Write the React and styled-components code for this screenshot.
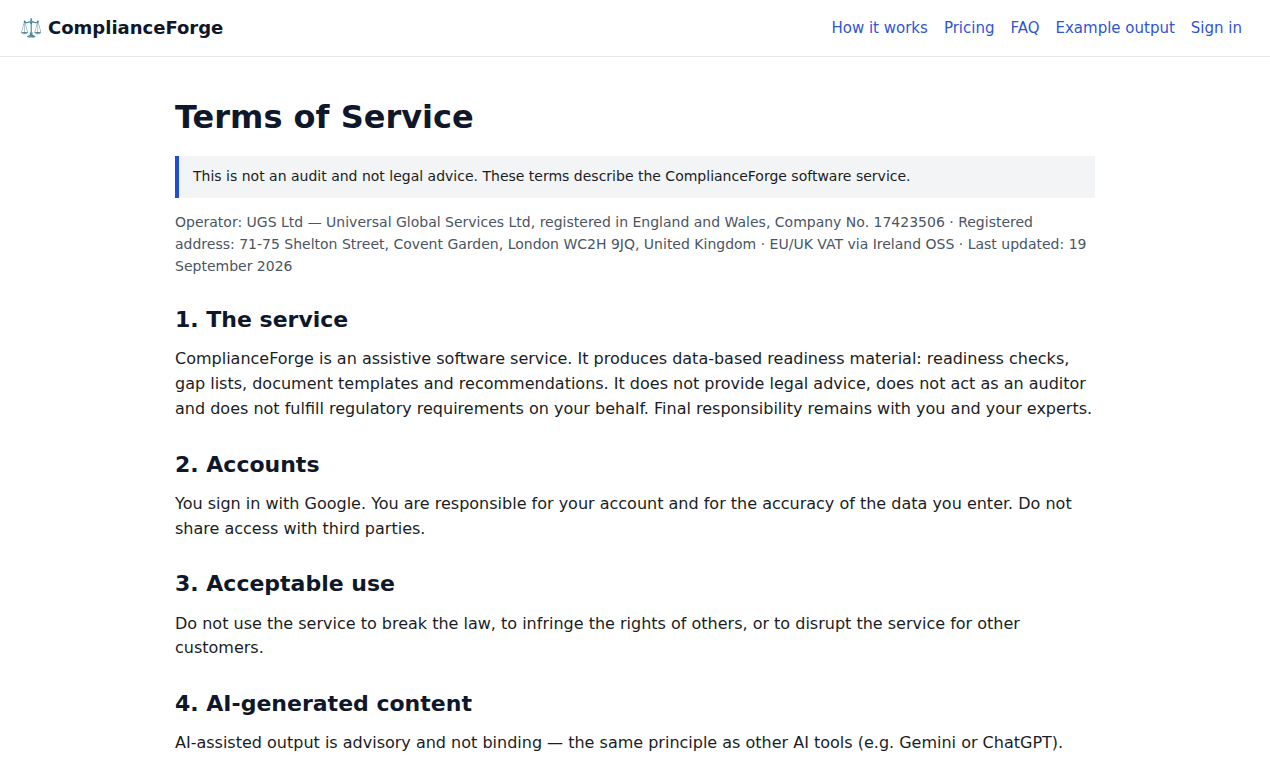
import React from "react";
import styled, { createGlobalStyle } from "styled-components";

const Global = createGlobalStyle`
  * { box-sizing: border-box; }
  html, body { margin: 0; padding: 0; background: #fff; }
  body { font-family: "DejaVu Sans", sans-serif; color: #0f172a; line-height: 1.5; font-size: 16px; }
`;
const Header = styled.header`
  height: 57px; border-bottom: 1px solid #e5e7eb; display: flex; align-items: center;
  justify-content: space-between; padding: 0 28px 0 20px; background: #fff;
`;
const Brand = styled.a`
  display: flex; align-items: center; gap: 6px; font-weight: 700; font-size: 18px; line-height: 26px; margin-top: -1px; color: #0f172a; text-decoration: none;
`;
const Nav = styled.nav`display: flex; gap: 16px;`;
const NavLink = styled.a`color: #2f55d4; font-size: 15px; text-decoration: none;`;
const Main = styled.main`width: 920px; margin: 0 auto; padding-top: 36px;`;
const Title = styled.h1`font-size: 32px; line-height: 48px; margin: 0 0 15px; font-weight: 700; color: #0f172a;`;
const Notice = styled.div`
  background: #f3f4f6; border-left: 4px solid #1d4ed8; padding: 9px 14px 11px; font-size: 14px; line-height: 22px; color: #1a1d24;
`;
const Meta = styled.p`font-size: 14px; line-height: 22px; color: #4b5563; margin: 13px 0 0;`;
const Section = styled.section`
  margin-top: 29px;
`;
const Heading = styled.h2`font-size: 22px; line-height: 28.6px; margin: 0 0 12.6px; font-weight: 700; color: #0f172a;`;
const Body = styled.p`font-size: 16px; line-height: 24.8px; margin: 0; color: #1a1d24;`;

const sections = [
  ["1. The service", "ComplianceForge is an assistive software service. It produces data-based readiness material: readiness checks, gap lists, document templates and recommendations. It does not provide legal advice, does not act as an auditor and does not fulfill regulatory requirements on your behalf. Final responsibility remains with you and your experts."],
  ["2. Accounts", "You sign in with Google. You are responsible for your account and for the accuracy of the data you enter. Do not share access with third parties."],
  ["3. Acceptable use", "Do not use the service to break the law, to infringe the rights of others, or to disrupt the service for other customers."],
  ["4. AI-generated content", "AI-assisted output is advisory and not binding — the same principle as other AI tools (e.g. Gemini or ChatGPT)."],
];

export default function App() {
  return (
    <>
      <Global />
      <Header>
        <Brand href="#"><span>⚖️</span>ComplianceForge</Brand>
        <Nav>
          {["How it works", "Pricing", "FAQ", "Example output", "Sign in"].map((t) => <NavLink key={t} href="#">{t}</NavLink>)}
        </Nav>
      </Header>
      <Main>
        <Title>Terms of Service</Title>
        <Notice>This is not an audit and not legal advice. These terms describe the ComplianceForge software service.</Notice>
        <Meta>Operator: UGS Ltd — Universal Global Services Ltd, registered in England and Wales, Company No. 17423506 · Registered address: 71-75 Shelton Street, Covent Garden, London WC2H 9JQ, United Kingdom · EU/UK VAT via Ireland OSS · Last updated: 19 September 2026</Meta>
        {sections.map(([h, b]) => (
          <Section key={h}><Heading>{h}</Heading><Body>{b}</Body></Section>
        ))}
      </Main>
    </>
  );
}
